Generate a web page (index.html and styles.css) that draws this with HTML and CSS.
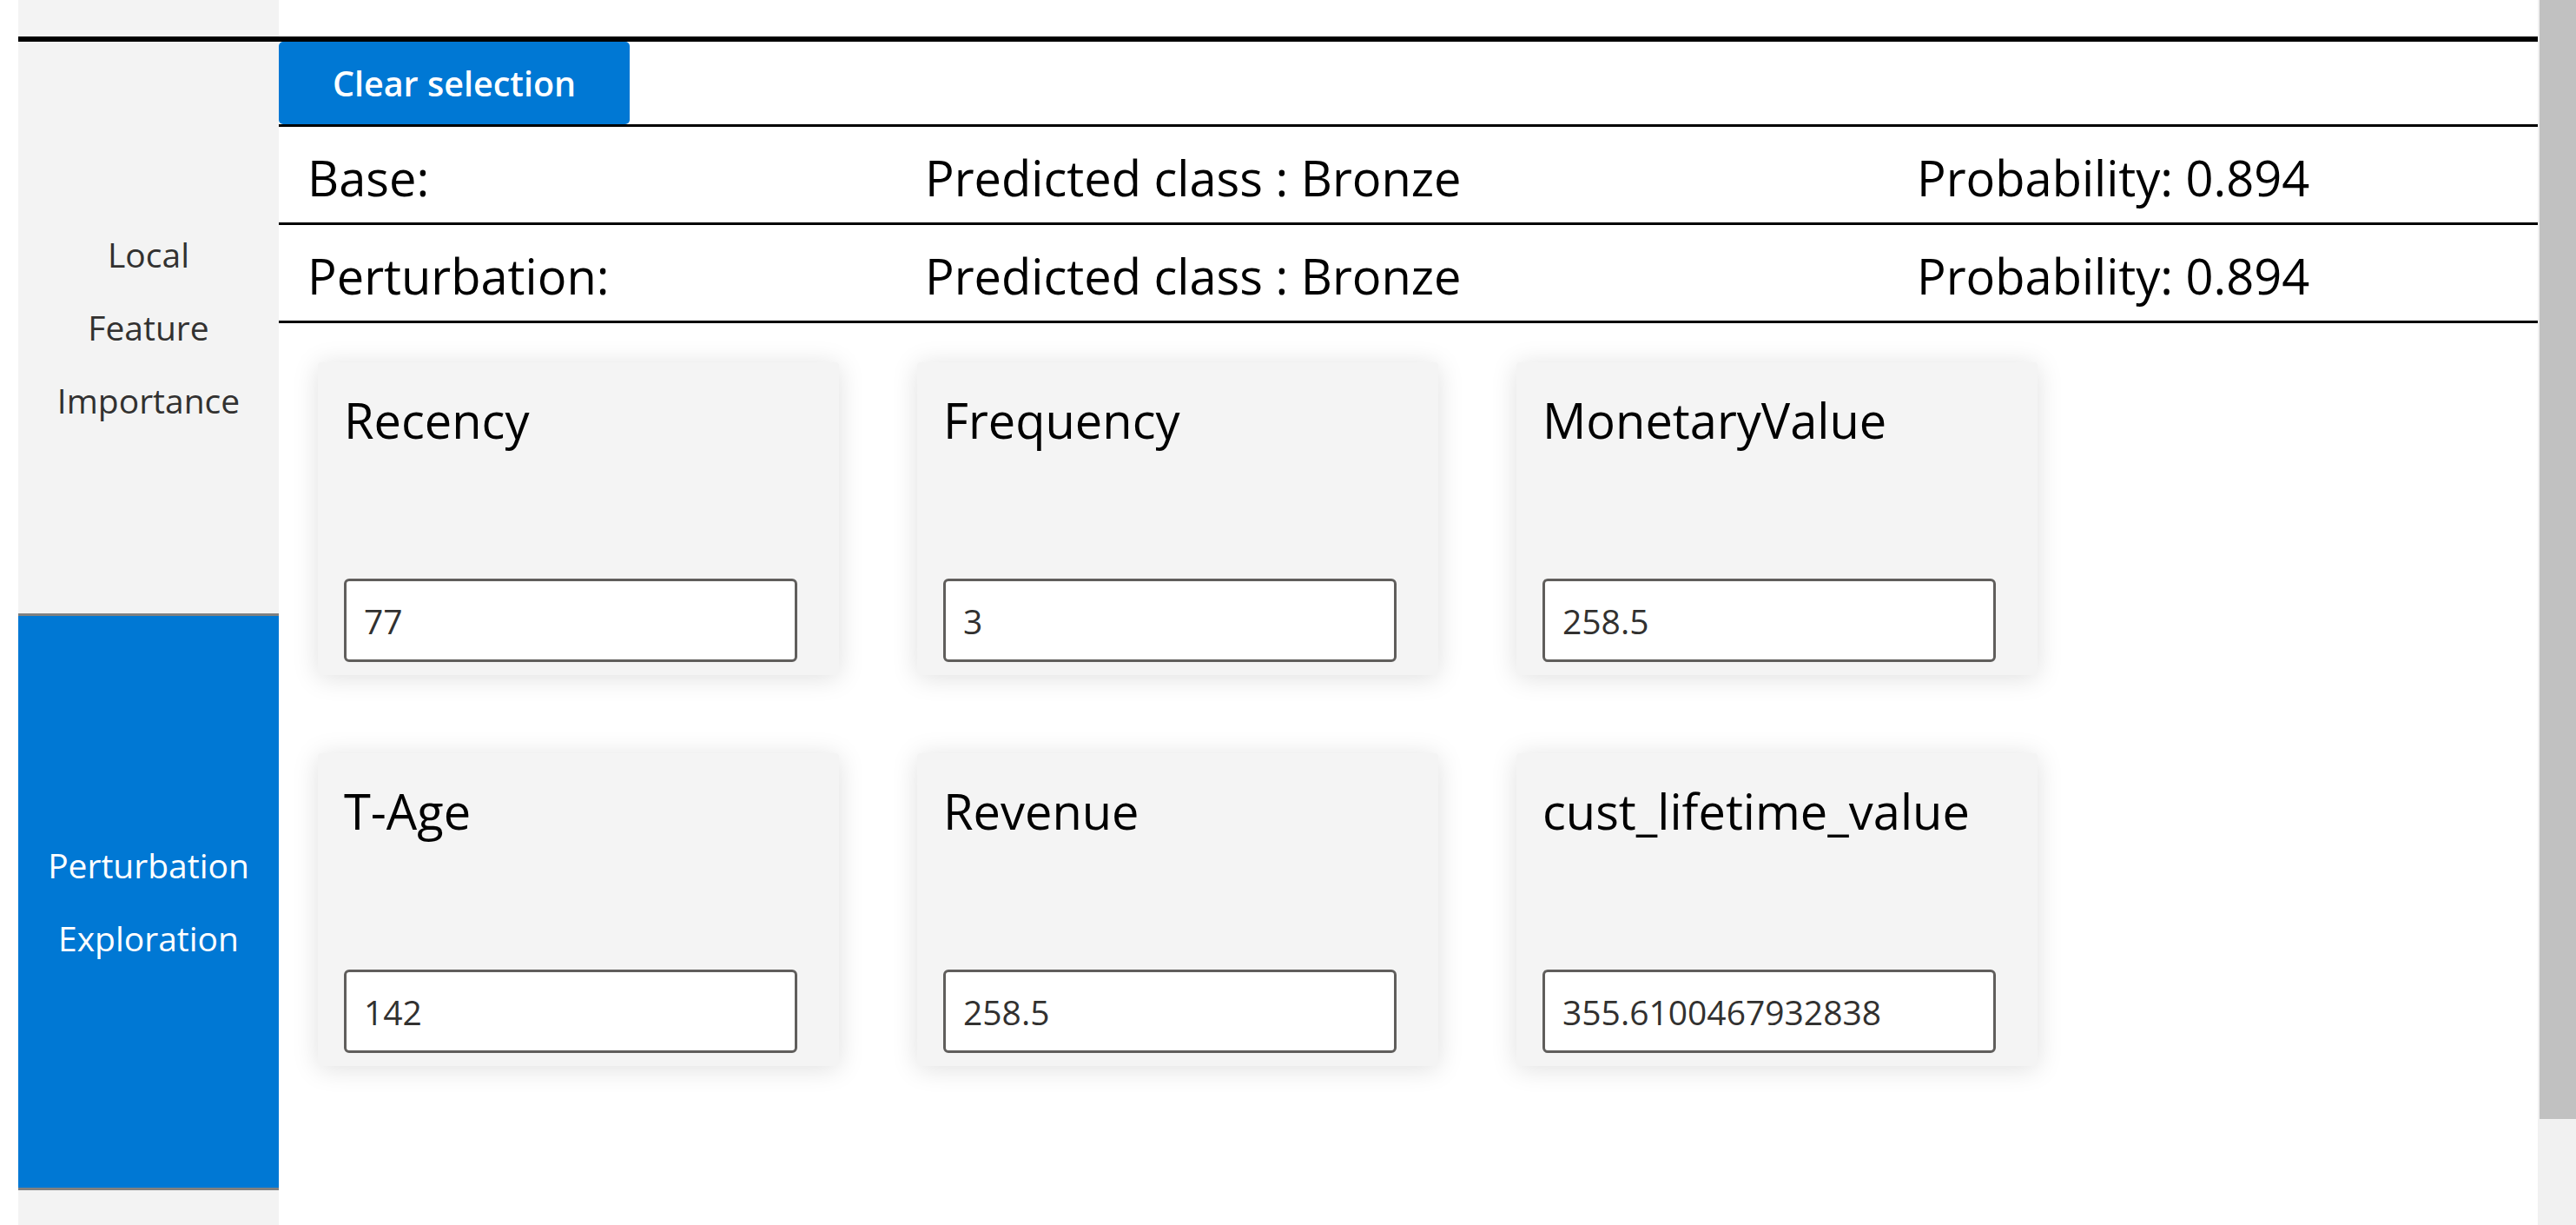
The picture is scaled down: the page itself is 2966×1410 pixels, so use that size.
FILE: index.html
```html
<!DOCTYPE html>
<html lang="en">
<head>
<meta charset="utf-8">
<title>Perturbation Exploration</title>
<link rel="stylesheet" href="styles.css">
</head>
<body>
<div class="app">
  <div class="gutter"></div>
  <div class="frame">
    <div class="top-strip">
      <div class="top-side"></div>
      <div class="top-main"></div>
    </div>
    <div class="rule"></div>
    <div class="body-row">
      <nav class="sidenav">
        <div class="nav-item">Local<br>Feature<br>Importance</div>
        <div class="nav-item active">Perturbation<br>Exploration</div>
        <div class="nav-rest"></div>
      </nav>
      <main class="main">
        <div class="toolbar">
          <button class="btn">Clear selection</button>
        </div>
        <div class="pred-row">
          <span>Base:</span>
          <span>Predicted class : Bronze</span>
          <span>Probability: 0.894</span>
        </div>
        <div class="pred-row">
          <span>Perturbation:</span>
          <span>Predicted class : Bronze</span>
          <span>Probability: 0.894</span>
        </div>
        <div class="cards">
          <div class="card">
            <div class="card-label">Recency</div>
            <input class="card-input" type="text" value="77">
          </div>
          <div class="card">
            <div class="card-label">Frequency</div>
            <input class="card-input" type="text" value="3">
          </div>
          <div class="card">
            <div class="card-label">MonetaryValue</div>
            <input class="card-input" type="text" value="258.5">
          </div>
          <div class="card">
            <div class="card-label">T-Age</div>
            <input class="card-input" type="text" value="142">
          </div>
          <div class="card">
            <div class="card-label">Revenue</div>
            <input class="card-input" type="text" value="258.5">
          </div>
          <div class="card">
            <div class="card-label">cust_lifetime_value</div>
            <input class="card-input" type="text" value="355.6100467932838">
          </div>
        </div>
      </main>
    </div>
  </div>
  <div class="scrollbar"><div class="thumb"></div></div>
</div>
</body>
</html>
```

FILE: styles.css
```css
* { box-sizing: border-box; }

html, body {
  margin: 0;
  padding: 0;
  width: 2966px;
  height: 1410px;
  overflow: hidden;
  background: #ffffff;
  font-family: "Open Sans", "Noto Sans", "Liberation Sans", sans-serif;
}

.app {
  display: flex;
  width: 2966px;
  height: 1410px;
}

.gutter {
  width: 21px;
  flex: none;
  background: #ffffff;
}

.frame {
  flex: 1;
  display: flex;
  flex-direction: column;
  min-width: 0;
}

.top-strip {
  display: flex;
  height: 42px;
  flex: none;
}

.top-side {
  width: 300px;
  background: #f3f3f3;
}

.top-main {
  flex: 1;
  background: #ffffff;
}

.rule {
  height: 6px;
  flex: none;
  background: #000000;
}

.body-row {
  flex: 1;
  display: flex;
  min-height: 0;
}

.sidenav {
  width: 300px;
  flex: none;
  display: flex;
  flex-direction: column;
  background: #f3f3f3;
}

.nav-item {
  height: 661px;
  flex: none;
  display: flex;
  align-items: center;
  justify-content: center;
  text-align: center;
  font-size: 39px;
  line-height: 84px;
  color: #323130;
  background: #f3f3f3;
  border-bottom: 3px solid #808080;
}

.nav-item.active {
  background: #0078d4;
  color: #ffffff;
}

.nav-rest {
  flex: 1;
  background: #f3f3f3;
}

.main {
  flex: 1;
  display: flex;
  flex-direction: column;
  min-width: 0;
}

.toolbar {
  height: 98px;
  flex: none;
  border-bottom: 3px solid #000000;
  display: flex;
  align-items: flex-start;
}

.btn {
  width: 404px;
  height: 95px;
  border: none;
  border-radius: 5px;
  background: #0078d4;
  color: #ffffff;
  font-family: "Open Sans", "Noto Sans", sans-serif;
  font-weight: 600;
  font-size: 39.5px;
  padding: 0;
  margin: 0;
}

.pred-row {
  display: grid;
  grid-template-columns: 711px 1142px 1fr;
  padding: 20px 0 14px 33px;
  font-size: 56px;
  line-height: 76px;
  color: #000000;
  border-bottom: 3px solid #000000;
  white-space: nowrap;
}

.cards {
  display: grid;
  grid-template-columns: repeat(3, 600px);
  grid-auto-rows: 360px;
  gap: 90px;
  padding: 45px;
}

.card {
  background: #f4f4f4;
  border-radius: 4px;
  box-shadow: 0 3px 30px rgba(0, 0, 0, 0.13);
  display: flex;
  flex-direction: column;
  justify-content: space-between;
  padding: 28px 0 15px 30px;
}

.card-label {
  font-size: 56px;
  line-height: 76px;
  color: #000000;
  white-space: nowrap;
}

.card-input {
  width: 522px;
  height: 96px;
  border: 3px solid #605e5c;
  border-radius: 6px;
  background: #ffffff;
  padding: 0 20px;
  margin: 0;
  font-family: "Open Sans", "Noto Sans", sans-serif;
  font-size: 39px;
  color: #323130;
  outline: none;
}

.scrollbar {
  width: 44px;
  flex: none;
  background: #f1f1f1;
  display: flex;
  flex-direction: column;
  align-items: flex-end;
}

.thumb {
  width: 42px;
  height: 1288px;
  background: #c1c1c1;
}
```
